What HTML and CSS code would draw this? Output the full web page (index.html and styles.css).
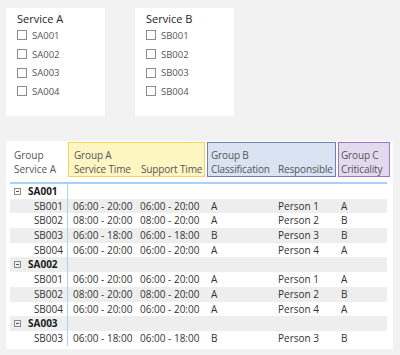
FILE: index.html
```html
<!DOCTYPE html>
<html lang="en">
<head>
    <meta charset="UTF-8">
    <meta name="viewport" content="width=device-width, initial-scale=1.0">
    <title>Service Matrix</title>
    <link rel="stylesheet" href="styles.css">
</head>
<body>
    <div class="slicers">
        <div class="slicer">
            <div class="slicer-title">Service A</div>
            <div class="slicer-item"><span class="checkbox"></span>SA001</div>
            <div class="slicer-item"><span class="checkbox"></span>SA002</div>
            <div class="slicer-item"><span class="checkbox"></span>SA003</div>
            <div class="slicer-item"><span class="checkbox"></span>SA004</div>
        </div>
        <div class="slicer">
            <div class="slicer-title">Service B</div>
            <div class="slicer-item"><span class="checkbox"></span>SB001</div>
            <div class="slicer-item"><span class="checkbox"></span>SB002</div>
            <div class="slicer-item"><span class="checkbox"></span>SB003</div>
            <div class="slicer-item"><span class="checkbox"></span>SB004</div>
        </div>
    </div>

    <div class="matrix">
        <div class="header">
            <div class="head-label">Group<br>Service A</div>
            <div class="group group-a">
                <div class="group-name">Group A</div>
                <div class="group-cols cols-a"><span>Service Time</span><span>Support Time</span></div>
            </div>
            <div class="group group-b">
                <div class="group-name">Group B</div>
                <div class="group-cols cols-b"><span>Classification</span><span>Responsible</span></div>
            </div>
            <div class="group group-c">
                <div class="group-name">Group C</div>
                <div class="group-cols"><span>Criticality</span></div>
            </div>
        </div>

        <div class="rows">
            <div class="row parent">
                <div class="cell first"><span class="expander"></span>SA001</div>
                <div class="cell"></div><div class="cell"></div><div class="cell"></div><div class="cell"></div><div class="cell"></div>
            </div>
            <div class="row">
                <div class="cell first">SB001</div>
                <div class="cell">06:00 - 20:00</div><div class="cell">06:00 - 20:00</div><div class="cell">A</div><div class="cell">Person 1</div><div class="cell">A</div>
            </div>
            <div class="row">
                <div class="cell first">SB002</div>
                <div class="cell">08:00 - 20:00</div><div class="cell">08:00 - 20:00</div><div class="cell">A</div><div class="cell">Person 2</div><div class="cell">B</div>
            </div>
            <div class="row">
                <div class="cell first">SB003</div>
                <div class="cell">06:00 - 18:00</div><div class="cell">06:00 - 18:00</div><div class="cell">B</div><div class="cell">Person 3</div><div class="cell">B</div>
            </div>
            <div class="row">
                <div class="cell first">SB004</div>
                <div class="cell">06:00 - 20:00</div><div class="cell">06:00 - 20:00</div><div class="cell">A</div><div class="cell">Person 4</div><div class="cell">A</div>
            </div>
            <div class="row parent">
                <div class="cell first"><span class="expander"></span>SA002</div>
                <div class="cell"></div><div class="cell"></div><div class="cell"></div><div class="cell"></div><div class="cell"></div>
            </div>
            <div class="row">
                <div class="cell first">SB001</div>
                <div class="cell">06:00 - 20:00</div><div class="cell">06:00 - 20:00</div><div class="cell">A</div><div class="cell">Person 1</div><div class="cell">A</div>
            </div>
            <div class="row">
                <div class="cell first">SB002</div>
                <div class="cell">08:00 - 20:00</div><div class="cell">08:00 - 20:00</div><div class="cell">A</div><div class="cell">Person 2</div><div class="cell">B</div>
            </div>
            <div class="row">
                <div class="cell first">SB004</div>
                <div class="cell">06:00 - 20:00</div><div class="cell">06:00 - 20:00</div><div class="cell">A</div><div class="cell">Person 4</div><div class="cell">A</div>
            </div>
            <div class="row parent">
                <div class="cell first"><span class="expander"></span>SA003</div>
                <div class="cell"></div><div class="cell"></div><div class="cell"></div><div class="cell"></div><div class="cell"></div>
            </div>
            <div class="row">
                <div class="cell first">SB003</div>
                <div class="cell">06:00 - 18:00</div><div class="cell">06:00 - 18:00</div><div class="cell">B</div><div class="cell">Person 3</div><div class="cell">B</div>
            </div>
        </div>
    </div>
</body>
</html>
```

FILE: styles.css
```css
body {
    margin: 0;
    padding: 8px 6px;
    font-family: "Open Sans", "Noto Sans", sans-serif;
    font-size: 10px;
    color: #333;
    background-color: #f2f2f2;
}
.slicers {
    display: flex;
    gap: 30px;
}
.slicer {
    width: 99px;
    height: 108px;
    box-sizing: border-box;
    padding: 4px 11px 0;
    background-color: white;
}
.slicer-title {
    font-size: 11px;
    line-height: 14px;
    color: #252423;
}
.slicer-item {
    display: flex;
    align-items: center;
    height: 18.7px;
    font-size: 9.5px;
    color: #555;
}
.checkbox {
    width: 10px;
    height: 10px;
    box-sizing: border-box;
    border: 1px solid #8c8c8c;
    margin-right: 5px;
}
.matrix {
    margin-top: 25px;
    width: 387px;
    box-sizing: border-box;
    padding: 1px 0 3px 4px;
    background-color: white;
}
.header {
    display: flex;
    height: 35px;
    line-height: 14px;
    color: #555;
}
.head-label {
    width: 58px;
    box-sizing: border-box;
    padding: 6px 0 0 4px;
}
.group {
    box-sizing: border-box;
    border: 1px solid;
    padding: 5px 0 0 4px;
    margin-right: 2px;
    letter-spacing: -0.15px;
    white-space: nowrap;
}
.group-a {
    width: 137px;
    background-color: #fdf6c3;
    border-color: #f3d55b;
    padding-left: 5px;
}
.group-b {
    width: 129px;
    background-color: #dae3f2;
    border-color: #6d84a8;
    padding-left: 3px;
}
.group-c {
    width: 52px;
    background-color: #e4d9ef;
    border-color: #9d77c4;
    padding-left: 2px;
    margin-right: 0;
}
.group-cols {
    display: flex;
}
.cols-a span:first-child {
    width: 67px;
}
.cols-b span:first-child {
    width: 67px;
}
.rows {
    margin-top: 5px;
    width: 377px;
    border-top: 2px solid #a9d3f5;
}
.row {
    display: grid;
    grid-template-columns: 58px 67px 71px 67px 63px 51px;
    height: 14.7px;
    line-height: 14.7px;
}
.row:nth-child(even) {
    background-color: #eeeeee;
}
.cell {
    padding-left: 5px;
    white-space: nowrap;
}
.cell.first {
    padding: 0 4px 0 0;
    text-align: right;
    border-right: 1px solid #a9d3f5;
}
.parent .cell.first {
    display: flex;
    align-items: center;
    padding-left: 4px;
    text-align: left;
    font-weight: bold;
    color: #1a1a1a;
}
.expander {
    position: relative;
    width: 7px;
    height: 7px;
    box-sizing: border-box;
    border: 1px solid #8a8a8a;
    margin-right: 7px;
}
.expander::after {
    content: "";
    position: absolute;
    left: 1px;
    top: 2px;
    width: 3px;
    height: 1px;
    background-color: #555;
}
```
